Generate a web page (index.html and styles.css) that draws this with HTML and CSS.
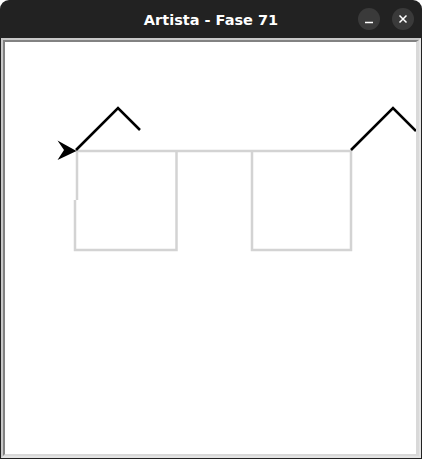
FILE: index.html
```html
<!DOCTYPE html>
<html>
<head>
<meta charset="utf-8">
<link rel="stylesheet" href="styles.css">
</head>
<body>
<div class="window">
  <div class="titlebar">
    <div class="spacer"></div>
    <div class="title">Artista - Fase 71</div>
    <div class="controls">
      <div class="btn"><svg width="22" height="22" viewBox="0 0 22 22"><line x1="7" y1="14.5" x2="15" y2="14.5" stroke="#fff" stroke-width="1.4"/></svg></div>
      <div class="btn"><svg width="22" height="22" viewBox="0 0 22 22"><path d="M7.5 7.5 L14.5 14.5 M14.5 7.5 L7.5 14.5" stroke="#fff" stroke-width="1.5"/></svg></div>
    </div>
  </div>
  <div class="frame">
    <div class="canvas">
      <svg class="drawing" width="411" height="411" viewBox="5 42 411 411">
        <g fill="none" stroke="#d3d3d3" stroke-width="2.5">
          <path d="M77 151 L77 200 M75 200 L75 250 L176.5 250 L176.5 151 M76 151 L351 151 L351 250 L252 250 L252 151"/>
        </g>
        <g fill="none" stroke="#000" stroke-width="2.6" stroke-linejoin="miter">
          <path d="M76 150 L118 108 L140 130"/>
          <path d="M351 150 L393 108 L416 131"/>
        </g>
        <polygon points="76.5,151 57.5,140.5 64,150 57.5,160" fill="#000"/>
      </svg>
    </div>
  </div>
</div>
</body>
</html>
```
FILE: styles.css
```css
html, body {
  margin: 0;
  padding: 0;
  background: #ffffff;
}
.window {
  width: 422px;
  height: 459px;
  background: #222222;
  border-radius: 9px 9px 0 0;
  display: flex;
  flex-direction: column;
  overflow: hidden;
}
.titlebar {
  height: 38px;
  display: grid;
  grid-template-columns: 1fr auto 1fr;
  align-items: center;
}
.title {
  font-family: "DejaVu Sans", sans-serif;
  font-weight: bold;
  font-size: 14.5px;
  color: #ffffff;
  padding-top: 1px;
}
.controls {
  display: flex;
  justify-content: flex-end;
  gap: 12px;
  padding-right: 8px;
}
.btn {
  width: 22px;
  height: 22px;
  border-radius: 50%;
  background: #3a3a3a;
  display: flex;
}
.frame {
  flex: 1;
  margin: 0 1px 1px 1px;
  border-top: 2px solid #c8c8c8;
  border-left: 2px solid #c8c8c8;
  border-right: 2px solid #e4e4e4;
  border-bottom: 2px solid #e4e4e4;
  display: flex;
}
.canvas {
  flex: 1;
  background: #ffffff;
  border-top: 2px solid #828282;
  border-left: 2px solid #828282;
  border-right: 3px solid #d9d9d9;
  border-bottom: 2px solid #d9d9d9;
  overflow: hidden;
  display: flex;
}
.drawing {
  display: block;
}
```
